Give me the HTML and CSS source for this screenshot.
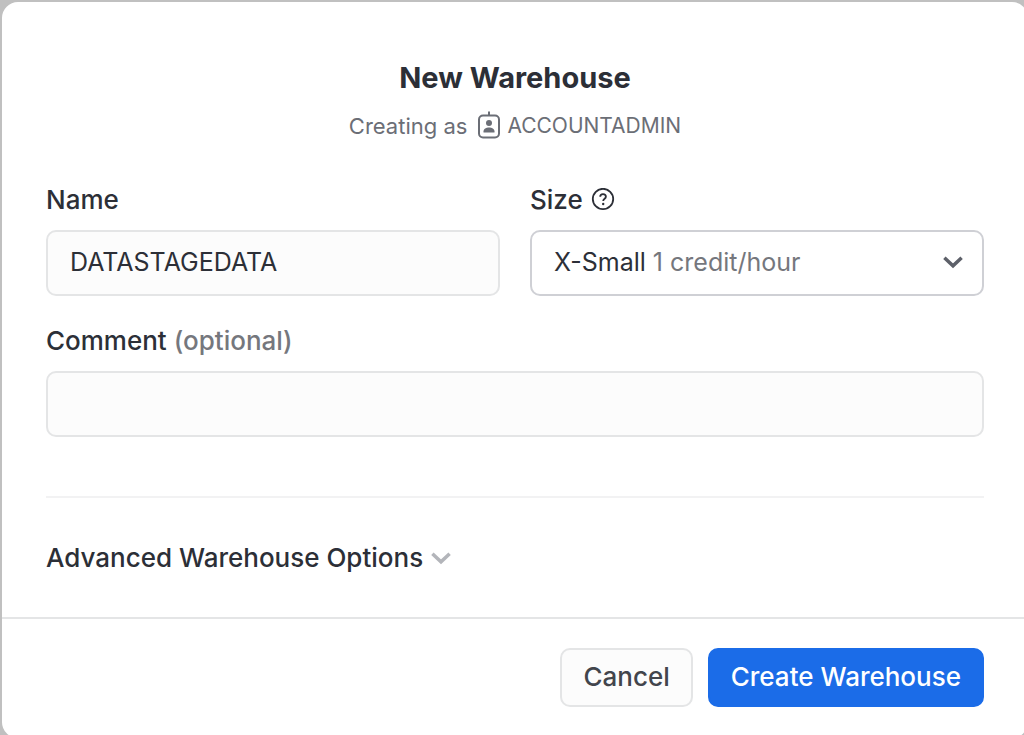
FILE: index.html
```html
<!DOCTYPE html>
<html lang="en">
<head>
<meta charset="utf-8">
<meta name="viewport" content="width=device-width, initial-scale=1">
<title>New Warehouse</title>
<link rel="stylesheet" href="styles.css">
</head>
<body class="backdrop">
<form class="dialog" role="dialog" aria-labelledby="dialog-title">
  <div class="content">
    <header class="heading">
      <h1 class="title" id="dialog-title">New Warehouse</h1>
      <p class="subtitle">
        <span>Creating as</span>
        <svg class="role-icon" width="24" height="28" viewBox="0 0 24 28" aria-hidden="true">
          <path d="M12 0.500V4.500" fill="none" stroke="currentColor" stroke-width="2"/>
          <rect x="2" y="4.500" width="20" height="22" rx="4" fill="none" stroke="currentColor" stroke-width="2"/>
          <circle cx="12" cy="12" r="3" fill="currentColor"/>
          <path d="M6.500 21.500v-1.300c0-2.300 2.800-3.700 5.500-3.700s5.500 1.400 5.500 3.700v1.300z" fill="currentColor"/>
        </svg>
        <span class="role">ACCOUNTADMIN</span>
      </p>
    </header>
    <div class="fields">
      <div class="field">
        <label class="label" for="name">Name</label>
        <input class="control" id="name" type="text" value="DATASTAGEDATA">
      </div>
      <div class="field">
        <div class="label-row">
          <label class="label" for="size">Size</label>
          <svg class="help-icon" width="24" height="24" viewBox="0 0 24 24" fill="none" stroke="currentColor" stroke-width="1.800" role="img" aria-label="Help">
            <circle cx="12" cy="11" r="10.200"/>
            <path d="M9.200 8.800c0-1.700 1.200-2.700 2.800-2.700s2.900 1 2.900 2.600c0 2-2.700 2.100-2.700 4.300"/>
            <circle cx="12.200" cy="16" r="1.200" fill="currentColor" stroke="none"/>
          </svg>
        </div>
        <div class="select-box">
          <select class="select" id="size">
            <option selected>X-Small 1 credit/hour</option>
          </select>
          <span class="select-value" aria-hidden="true"><span>X-Small <span class="muted">1 credit/hour</span></span>
            <svg class="select-chevron" width="20" height="13" viewBox="0 0 20 13" fill="none" stroke="currentColor" stroke-width="3.500"><path d="M1.400 1.700L10 9.800l8.600-8.100"/></svg>
          </span>
        </div>
      </div>
      <div class="field field-wide">
        <label class="label" for="comment">Comment <span class="muted">(optional)</span></label>
        <input class="control" id="comment" type="text">
      </div>
    </div>
    <div class="advanced">
      <button class="disclosure" type="button" aria-expanded="false">Advanced Warehouse Options
        <svg class="disclosure-chevron" width="20" height="13" viewBox="0 0 20 13" fill="none" stroke="currentColor" stroke-width="3.500" aria-hidden="true"><path d="M1.400 1.700L10 9.800l8.600-8.100"/></svg>
      </button>
    </div>
  </div>
  <footer class="actions">
    <button class="button" type="button">Cancel</button>
    <button class="button button-primary" type="submit">Create Warehouse</button>
  </footer>
</form>
</body>
</html>
```
FILE: styles.css
```css
* { box-sizing: border-box; }

.backdrop {
  margin: 0;
  padding: 2px 0 0 2px;
  height: 100vh;
  overflow: hidden;
  background: #c0c0c0;
  color: #2c2f37;
  font-family: Inter, "Liberation Sans", sans-serif;
  font-size: 26px;
  line-height: 32px;
}

.dialog {
  margin-right: -4px;
  border-radius: 16px;
  background: #fff;
}

.content { padding: 60px 44px 0; }

.heading { text-align: center; }

.title {
  margin: 0;
  font-size: 29px;
  line-height: 32px;
  font-weight: 700;
}

.subtitle {
  display: flex;
  justify-content: center;
  align-items: center;
  margin: 16px 0 0;
  color: #6b6e76;
  font-size: 22px;
}

.role-icon { margin: 0 6px 2px 10px; }
.role { font-size: 21px; }

.fields {
  display: grid;
  grid-template-columns: 1fr 1fr;
  gap: 29px 30px;
  margin-top: 42px;
}

.field {
  display: flex;
  flex-direction: column;
  gap: 14px;
  min-width: 0;
}

.field-wide { grid-column: 1 / -1; }
.label { font-weight: 500; }

.label-row {
  display: flex;
  align-items: center;
  gap: 8px;
}

.muted { color: #75777d; font-weight: 400; }
.label .muted { font-weight: 500; }

.control,
.select {
  width: 100%;
  height: 66px;
  padding: 0 22px 2px;
  border: 2px solid #e4e5e6;
  border-radius: 10px;
  background: #fcfcfc;
  color: inherit;
  font: inherit;
  font-size: 25px;
}

.select-box { display: grid; }

.select,
.select-value { grid-area: 1 / 1; }

.select {
  appearance: none;
  border-color: #cfd0d5;
  background: #fff;
  color: transparent;
}

.select-value {
  display: flex;
  align-items: center;
  justify-content: space-between;
  padding: 0 21px 2px 24px;
  font-size: 25px;
  pointer-events: none;
}

.select-chevron { color: #5d6069; }

.advanced {
  margin-top: 59px;
  padding: 44px 0 43px;
  border-top: 2px solid #f2f2f3;
}

.disclosure {
  display: flex;
  align-items: center;
  gap: 8px;
  padding: 0;
  border: 0;
  background: none;
  color: inherit;
  font: inherit;
  font-weight: 500;
}

.disclosure-chevron { color: #b3b5ba; }

.actions {
  display: flex;
  justify-content: flex-end;
  gap: 15px;
  padding: 29px 44px 31px;
  border-top: 2px solid #e4e5e6;
}

.button {
  height: 59px;
  padding: 0 21px 2px;
  border: 2px solid #e4e5e6;
  border-radius: 10px;
  background: #fcfcfc;
  color: #42454c;
  font: inherit;
  font-weight: 500;
}

.button-primary {
  border-color: #1b6ce8;
  background: #1b6ce8;
  color: #fff;
}
```
